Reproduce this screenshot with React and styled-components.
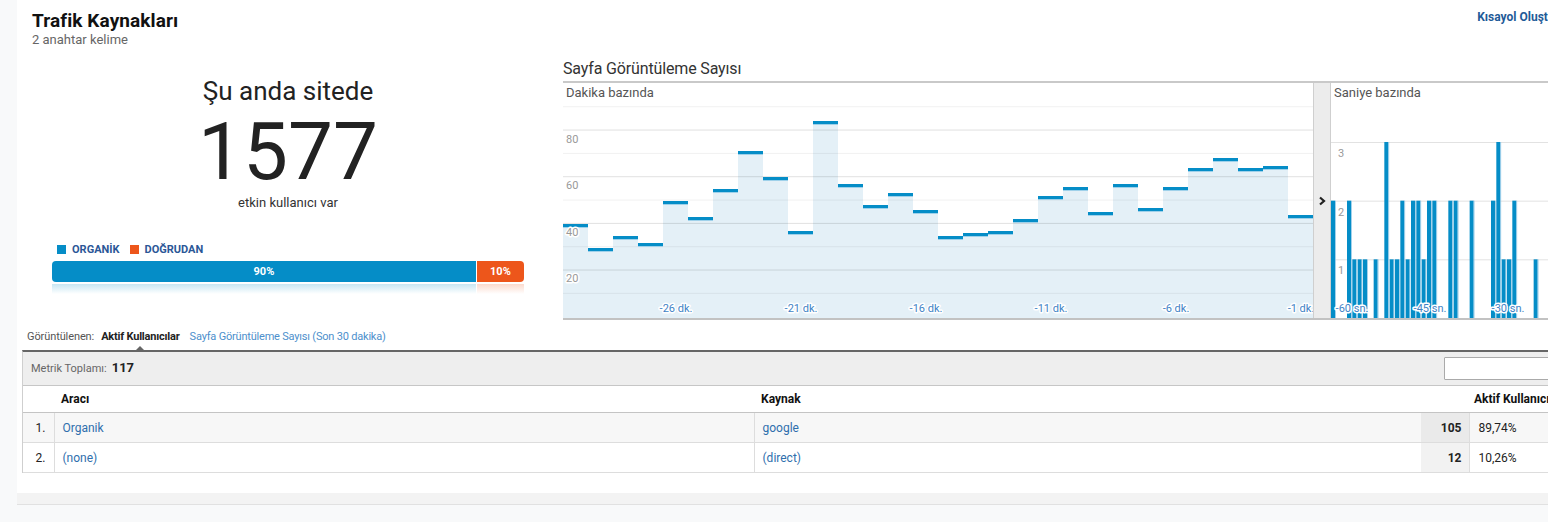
import React from "react";
import styled, { createGlobalStyle } from "styled-components";

const GlobalStyle = createGlobalStyle`
  html, body { margin: 0; padding: 0; background: #f8f9fa; overflow: hidden; }
  body { font-family: Roboto, "Noto Sans", "Liberation Sans", sans-serif; color: #222; }
  * { box-sizing: border-box; }
`;

const BLUE = "#058dc7";
const ORANGE = "#ed561b";

const Page = styled.div`
  width: 1700px;
  padding-left: 17px;
  background: #f8f9fa;
  min-height: 522px;
`;

const Card = styled.div`
  width: 1600px;
  background: #fff;
  padding-bottom: 20px;
`;

const FooterBand = styled.div`
  width: 1600px;
  height: 12px;
  background: #f3f3f3;
  border-bottom: 1px solid #e1e1e1;
`;

const Header = styled.header`
  display: flex;
  justify-content: space-between;
  align-items: flex-start;
  padding: 9px 58px 0 15px;
`;

const TitleBlock = styled.div`
  display: flex;
  flex-direction: column;
`;

const Title = styled.h1`
  margin: 0;
  font-size: 19px;
  line-height: 23px;
  font-weight: 700;
  letter-spacing: 0.1px;
  color: #111;
`;

const Subtitle = styled.div`
  font-size: 13px;
  line-height: 15px;
  color: #666;
`;

const ShortcutLink = styled.a`
  font-size: 12px;
  line-height: 16px;
  font-weight: 700;
  color: #1f5b98;
  white-space: nowrap;
  text-decoration: none;
`;

const MainRow = styled.section`
  display: flex;
  margin-top: 12px;
`;

const LeftPanel = styled.div`
  width: 546px;
  flex: none;
  padding: 17px 39px 0 35px;
  display: flex;
  flex-direction: column;
  align-items: center;
`;

const LiveLabel = styled.div`
  font-size: 26px;
  line-height: 30px;
  color: #222;
`;

const BigNumber = styled.div`
  font-size: 80px;
  line-height: 72px;
  margin-top: 10px;
  color: #222;
  font-weight: 400;
`;

const LiveSub = styled.div`
  font-size: 13px;
  line-height: 16px;
  margin-top: 7px;
  color: #333;
`;

const Legend = styled.div`
  align-self: stretch;
  display: flex;
  gap: 10px;
  margin-top: 32px;
  padding-left: 5px;
`;

const LegendItem = styled.span`
  display: flex;
  align-items: center;
  gap: 6px;
  font-size: 11px;
  line-height: 13px;
  font-weight: 700;
  color: #2b5797;
  &::before {
    content: "";
    width: 9px;
    height: 9px;
    background: ${(p) => p.$color};
  }
`;

const SplitBar = styled.div`
  align-self: stretch;
  display: flex;
  gap: 1px;
  height: 21px;
  margin-top: 5px;
`;

const Segment = styled.div`
  flex: ${(p) => p.$share};
  background: ${(p) => p.$color};
  border-radius: ${(p) => (p.$first ? "4px 0 0 4px" : "0 4px 4px 0")};
  color: #fff;
  font-size: 11px;
  font-weight: 700;
  display: flex;
  align-items: center;
  justify-content: center;
`;

const Reflection = styled.div`
  align-self: stretch;
  display: flex;
  gap: 1px;
  height: 10px;
  margin-top: 2px;
`;

const ReflectionPart = styled.div`
  flex: ${(p) => p.$share};
  background: linear-gradient(${(p) => p.$tint}, rgba(255, 255, 255, 0));
`;

const ChartBlock = styled.div`
  flex: 1;
  min-width: 0;
`;

const ChartTitle = styled.h2`
  margin: 0;
  font-size: 16px;
  line-height: 20px;
  font-weight: 400;
  letter-spacing: -0.15px;
  color: #333;
  padding-bottom: 2px;
  border-bottom: 2px solid #c9c9c9;
`;

const Panels = styled.div`
  display: flex;
  height: 237px;
  border-bottom: 2px solid #c2c2c2;
`;

const ChartPanel = styled.div`
  display: flex;
  flex-direction: column;
  width: ${(p) => (p.$width ? `${p.$width}px` : "auto")};
  flex: ${(p) => (p.$width ? "none" : "1")};
  overflow: hidden;
`;

const PanelLabel = styled.div`
  font-size: 13px;
  line-height: 20px;
  height: 20px;
  padding-left: 3px;
  color: #555;
`;

const CollapseStrip = styled.div`
  width: 18px;
  flex: none;
  background: #ececec;
  border-left: 1px solid #cfcfcf;
  border-right: 1px solid #cfcfcf;
  display: flex;
  align-items: center;
  justify-content: center;
`;

const AxisText = styled.text`
  font-family: Roboto, "Noto Sans", sans-serif;
  font-size: 11px;
  fill: ${(p) => p.$color};
  stroke: #fff;
  stroke-width: 3px;
  paint-order: stroke;
  stroke-linejoin: round;
`;

const Tabs = styled.div`
  display: flex;
  align-items: baseline;
  margin-top: 10px;
  padding-left: 10px;
  font-size: 11px;
  line-height: 13px;
`;

const TabLabel = styled.span`
  color: #555;
  margin-right: 7px;
  letter-spacing: -0.1px;
`;

const Tab = styled.span`
  position: relative;
  color: ${(p) => (p.$active ? "#222" : "#4d8fcc")};
  font-weight: ${(p) => (p.$active ? 700 : 400)};
  margin-right: 10px;
  letter-spacing: -0.2px;
  &::after {
    content: "";
    display: ${(p) => (p.$active ? "block" : "none")};
    position: absolute;
    left: 50%;
    margin-left: -6px;
    bottom: -9px;
    border: 6px solid transparent;
    border-top: 0;
    border-bottom-color: #666;
  }
`;

const TableBox = styled.div`
  margin: 7px 5px 0 5px;
  border-top: 2px solid #666;
  border-left: 1px solid #cfcfcf;
`;

const MetricBar = styled.div`
  height: 34px;
  background: #eee;
  border-bottom: 1px solid #c6c6c6;
  display: flex;
  align-items: center;
  justify-content: space-between;
  padding: 0 8px 3px 8px;
`;

const MetricLabel = styled.span`
  font-size: 11px;
  color: #666;
  b {
    font-size: 13px;
    color: #222;
    margin-left: 5px;
  }
`;

const SearchInput = styled.input`
  width: 160px;
  height: 23px;
  border: 1px solid #aaa;
  background: #fff;
  border-radius: 1px;
  margin-top: 3px;
`;

const Table = styled.table`
  width: 100%;
  border-collapse: collapse;
  table-layout: fixed;
  font-size: 12px;
`;

const Th = styled.th`
  height: 26px;
  padding: 0 0 0 ${(p) => p.$pad || 7}px;
  text-align: left;
  font-weight: 700;
  color: #111;
  border-bottom: 1px solid #c4c4c4;
  white-space: nowrap;
  overflow: hidden;
`;

const Row = styled.tr`
  background: ${(p) => (p.$alt ? "#f7f7f7" : "#fff")};
`;

const Td = styled.td`
  height: 30px;
  border-bottom: 1px solid #ddd;
  padding: 1px ${(p) => p.$padRight || 0}px 0 ${(p) => p.$padLeft || 0}px;
  text-align: ${(p) => p.$align || "left"};
  color: ${(p) => (p.$link ? "#2f6fad" : "#222")};
  font-weight: ${(p) => (p.$bold ? 700 : 400)};
  background: ${(p) => p.$bg || "transparent"};
  border-right: ${(p) => (p.$divider ? "1px solid #ddd" : "0")};
  white-space: nowrap;
`;

const minuteTops = [121, 145, 133, 140, 98, 114, 86, 48, 74, 128, 18, 81, 102, 90, 107, 133, 130, 128, 116, 93, 84, 109, 81, 105, 84, 65, 55, 65, 63, 112];
const minuteLabels = ["-26 dk.", "-21 dk.", "-16 dk.", "-11 dk.", "-6 dk.", "-1 dk."];

function MinuteChart() {
  const H = 215;
  const grid = Array.from({ length: 9 }, (_, i) => i + 1);
  return (
    <svg width="750" height={H} style={{ display: "block" }}>
      {minuteTops.map((t, i) => (
        <rect key={`f${i}`} x={i * 25} y={t} width="25" height={H - t} fill="#e4f0f7" />
      ))}
      {grid.map((k) => (
        <line
          key={k}
          x1="0"
          x2="750"
          y1={213.7 - k * 23.33}
          y2={213.7 - k * 23.33}
          stroke="#000"
          strokeOpacity={k % 2 === 0 ? 0.12 : 0.06}
          strokeWidth="1"
        />
      ))}
      {minuteTops.map((t, i) => (
        <g key={`l${i}`}>
          <rect x={i * 25} y={t} width="25" height="3" fill={BLUE} />
          <rect x={i * 25} y={t + 3} width="25" height="1" fill="#9fd1ea" />
        </g>
      ))}
      {[
        ["80", 39.5],
        ["60", 86],
        ["40", 132.7],
        ["20", 179],
      ].map(([v, y]) => (
        <AxisText key={v} x="3" y={y} $color="#999">
          {v}
        </AxisText>
      ))}
      {minuteLabels.map((l, i) => (
        <AxisText key={l} x={113 + i * 125} y="208.5" textAnchor="middle" $color="#4283c6">
          {l}
        </AxisText>
      ))}
    </svg>
  );
}

const secondValues = { 0: 2, 3: 2, 4: 1, 5: 1, 6: 1, 8: 1, 10: 3, 11: 1, 12: 1, 13: 2, 14: 1, 15: 2, 16: 2, 17: 1, 18: 2, 19: 2, 22: 2, 23: 2, 26: 2, 30: 2, 31: 3, 32: 1, 33: 1, 34: 2, 38: 1 };

function SecondsChart() {
  const H = 215;
  const unit = 58.67;
  return (
    <svg width="300" height={H} style={{ display: "block" }}>
      {[1, 2, 3].map((k) => (
        <line key={k} x1="0" x2="300" y1={H - k * unit + 0.5} y2={H - k * unit + 0.5} stroke="#e2e2e2" strokeWidth="1" />
      ))}
      {Object.entries(secondValues).map(([slot, v]) => {
        const x = Number(slot) * 5.333;
        const h = v * unit;
        return (
          <g key={slot}>
            <rect x={x} y={H - h} width="4" height={h} fill={BLUE} />
            <rect x={x + 4} y={H - h} width="0.8" height={h} fill="#8cc6e6" />
          </g>
        );
      })}
      {[
        ["3", 53.7],
        ["2", 112.7],
        ["1", 171],
      ].map(([v, y]) => (
        <AxisText key={v} x="7" y={y} $color="#999">
          {v}
        </AxisText>
      ))}
      {[
        ["-60 sn.", 21],
        ["-45 sn.", 99],
        ["-30 sn.", 177],
      ].map(([l, x]) => (
        <AxisText key={l} x={x} y="208.5" textAnchor="middle" $color="#4283c6">
          {l}
        </AxisText>
      ))}
    </svg>
  );
}

const rows = [
  { n: "1.", medium: "Organik", source: "google", value: "105", pct: "89,74%" },
  { n: "2.", medium: "(none)", source: "(direct)", value: "12", pct: "10,26%" },
];

export default function App() {
  return (
    <>
      <GlobalStyle />
      <Page>
        <Card>
          <Header>
            <TitleBlock>
              <Title>Trafik Kaynakları</Title>
              <Subtitle>2 anahtar kelime</Subtitle>
            </TitleBlock>
            <ShortcutLink href="#">Kısayol Oluştur</ShortcutLink>
          </Header>

          <MainRow>
            <LeftPanel>
              <LiveLabel>Şu anda sitede</LiveLabel>
              <BigNumber>1577</BigNumber>
              <LiveSub>etkin kullanıcı var</LiveSub>
              <Legend>
                <LegendItem $color={BLUE}>ORGANİK</LegendItem>
                <LegendItem $color={ORANGE}>DOĞRUDAN</LegendItem>
              </Legend>
              <SplitBar>
                <Segment $share={90} $color={BLUE} $first>
                  90%
                </Segment>
                <Segment $share={10} $color={ORANGE}>
                  10%
                </Segment>
              </SplitBar>
              <Reflection>
                <ReflectionPart $share={90} $tint="rgba(5,141,199,0.22)" />
                <ReflectionPart $share={10} $tint="rgba(237,86,27,0.22)" />
              </Reflection>
            </LeftPanel>

            <ChartBlock>
              <ChartTitle>Sayfa Görüntüleme Sayısı</ChartTitle>
              <Panels>
                <ChartPanel $width={750}>
                  <PanelLabel>Dakika bazında</PanelLabel>
                  <MinuteChart />
                </ChartPanel>
                <CollapseStrip>
                  <svg width="8" height="10" viewBox="0 0 8 10">
                    <polyline points="2,1.5 6,5 2,8.5" fill="none" stroke="#222" strokeWidth="2.2" />
                  </svg>
                </CollapseStrip>
                <ChartPanel>
                  <PanelLabel>Saniye bazında</PanelLabel>
                  <SecondsChart />
                </ChartPanel>
              </Panels>
            </ChartBlock>
          </MainRow>

          <Tabs>
            <TabLabel>Görüntülenen:</TabLabel>
            <Tab $active>Aktif Kullanıcılar</Tab>
            <Tab>Sayfa Görüntüleme Sayısı (Son 30 dakika)</Tab>
          </Tabs>

          <TableBox>
            <MetricBar>
              <MetricLabel>
                Metrik Toplamı:<b>117</b>
              </MetricLabel>
              <SearchInput type="text" aria-label="Ara" />
            </MetricBar>
            <Table>
              <colgroup>
                <col style={{ width: 31 }} />
                <col style={{ width: 700 }} />
                <col style={{ width: 667 }} />
                <col style={{ width: 48 }} />
                <col />
              </colgroup>
              <thead>
                <tr>
                  <Th />
                  <Th $pad={7}>Aracı</Th>
                  <Th $pad={7}>Kaynak</Th>
                  <Th colSpan={2} $pad={53}>
                    Aktif Kullanıcılar
                  </Th>
                </tr>
              </thead>
              <tbody>
                {rows.map((r, i) => (
                  <Row key={r.n} $alt={i === 0}>
                    <Td $align="right" $padRight={8} $divider>
                      {r.n}
                    </Td>
                    <Td $padLeft={8} $link $divider>
                      {r.medium}
                    </Td>
                    <Td $padLeft={8} $link>
                      {r.source}
                    </Td>
                    <Td $align="right" $padRight={7} $bold $divider $bg={i === 0 ? "#eaeaea" : "#f2f2f2"}>
                      {r.value}
                    </Td>
                    <Td $padLeft={9}>{r.pct}</Td>
                  </Row>
                ))}
              </tbody>
            </Table>
          </TableBox>
        </Card>
        <FooterBand />
      </Page>
    </>
  );
}
